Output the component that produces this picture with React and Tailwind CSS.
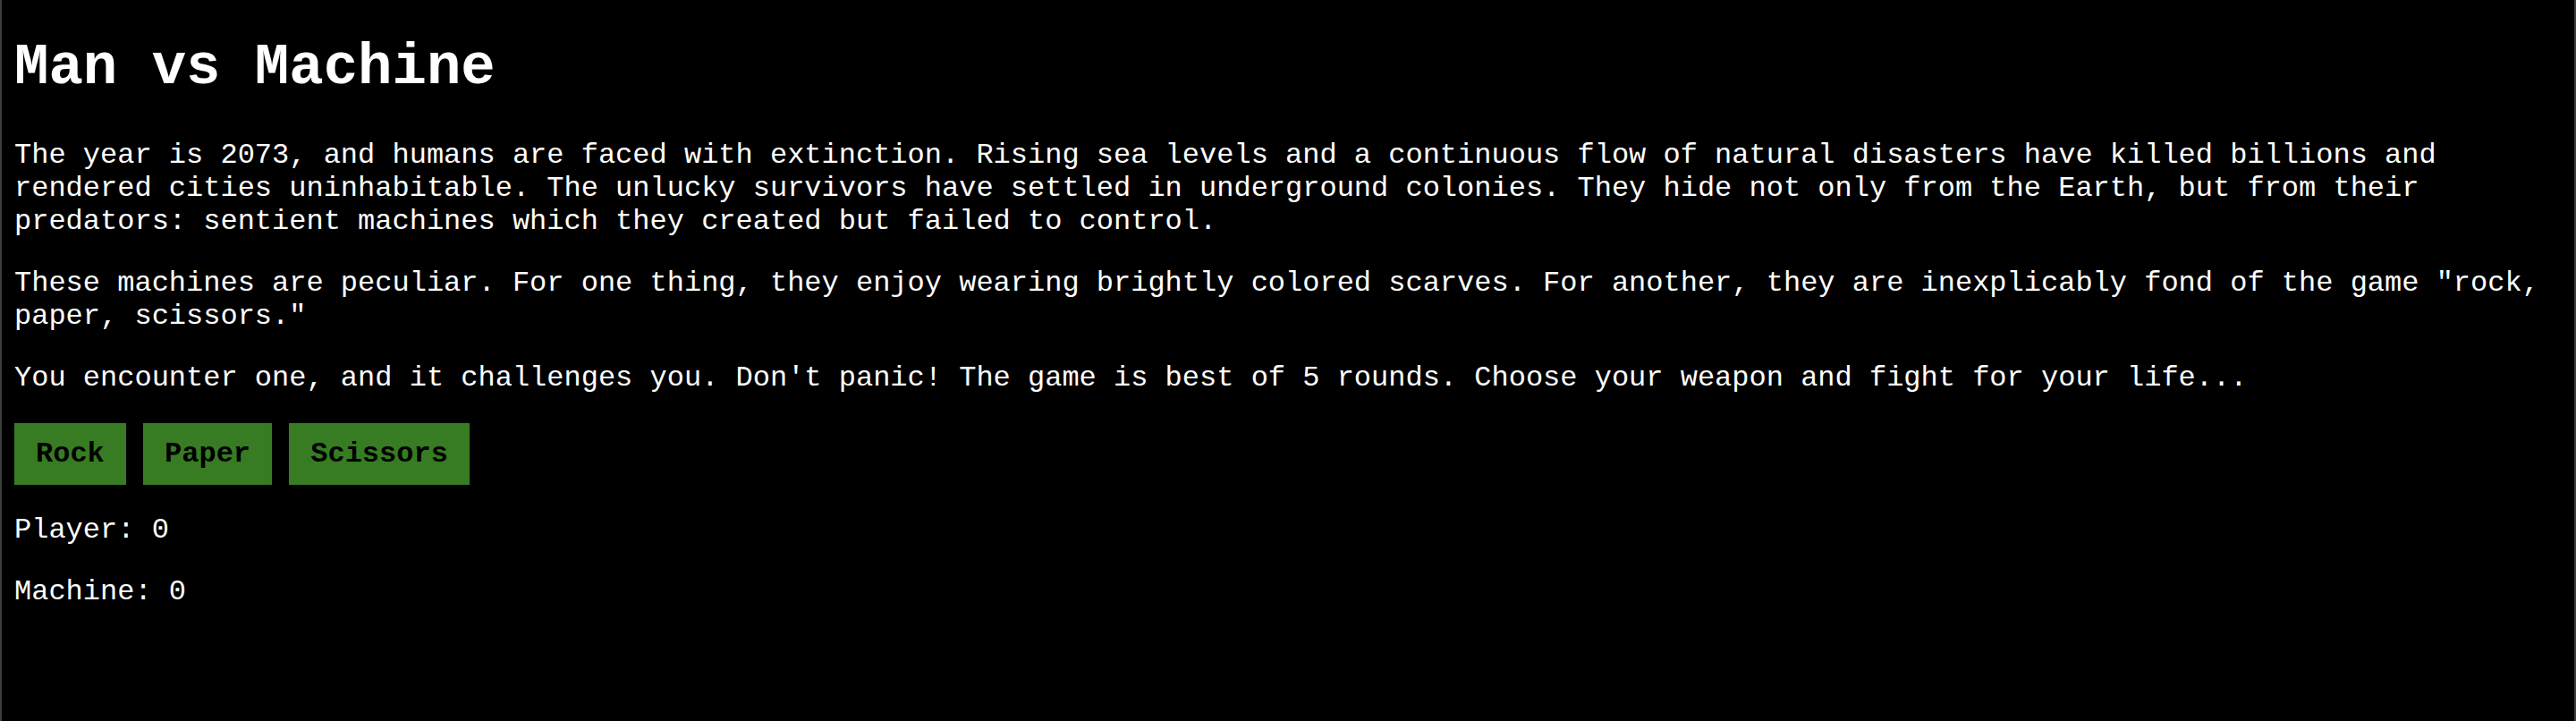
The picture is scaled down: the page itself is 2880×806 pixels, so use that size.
export default function App() {
  const mono = { fontFamily: '"Liberation Mono", "Courier New", monospace' };
  return (
    <div
      className="min-h-[806px] bg-black text-white border-x-2 border-[#3d3d3d] px-[14px] pt-px pb-8 text-[32px] leading-[normal]"
      style={mono}
    >
      <h1 className="text-[64px] font-bold mt-[39px] mb-[43px] leading-[normal]">Man vs Machine</h1>
      <p className="mb-8">
        The year is 2073, and humans are faced with extinction. Rising sea levels and a continuous flow of natural disasters have killed billions and rendered cities uninhabitable. The unlucky survivors have settled in underground colonies. They hide not only from the Earth, but from their predators: sentient machines which they created but failed to control.
      </p>
      <p className="mb-8">
        These machines are peculiar. For one thing, they enjoy wearing brightly colored scarves. For another, they are inexplicably fond of the game "rock, paper, scissors."
      </p>
      <p className="mb-8">
        You encounter one, and it challenges you. Don't panic! The game is best of 5 rounds. Choose your weapon and fight for your life...
      </p>
      <div>
        <button className="bg-[#377c22] text-black font-bold px-6 py-4 leading-[normal]" style={mono}>Rock</button>{" "}
        <button className="bg-[#377c22] text-black font-bold px-6 py-4 leading-[normal]" style={mono}>Paper</button>{" "}
        <button className="bg-[#377c22] text-black font-bold px-6 py-4 leading-[normal]" style={mono}>Scissors</button>
      </div>
      <p className="mt-8 mb-8">Player: 0</p>
      <p>Machine: 0</p>
    </div>
  );
}
